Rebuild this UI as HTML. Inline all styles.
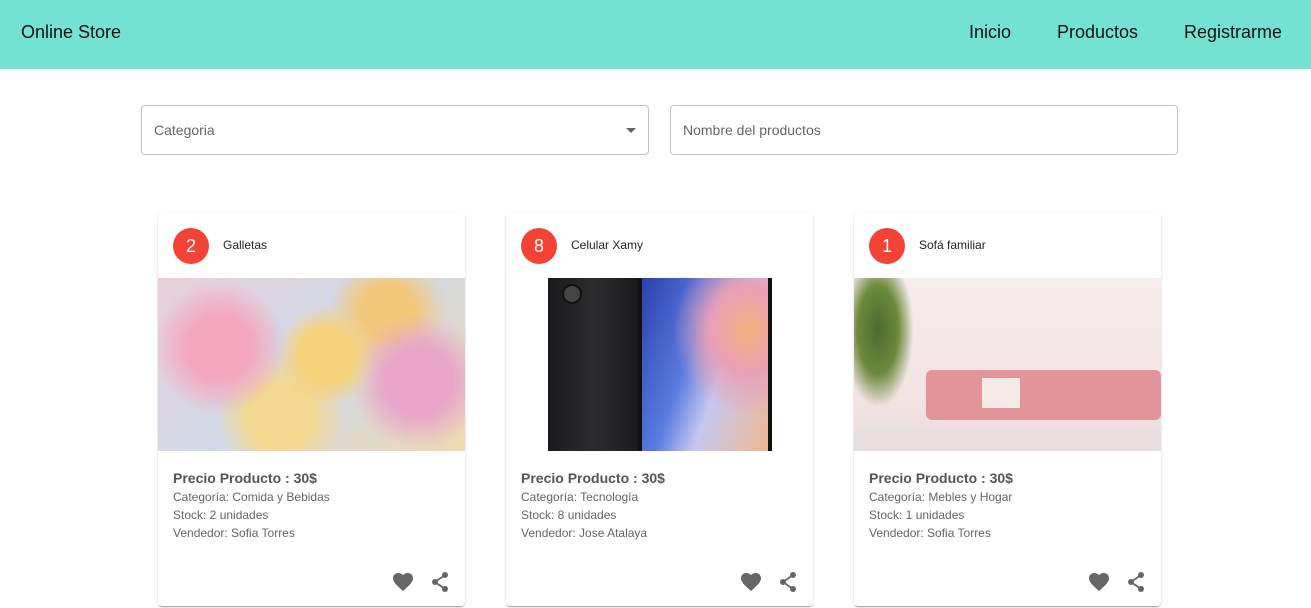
<!DOCTYPE html>
<html><head><style>
*{box-sizing:border-box;margin:0;padding:0}
body{width:1311px;height:608px;overflow:hidden;background:#fff;font-family:"Liberation Sans",Roboto,sans-serif;position:relative}
.bar{position:absolute;left:0;top:0;width:1311px;height:69px;background:#74e2d2}
.bar .t{position:absolute;left:21px;top:22px;font-size:18px;color:#111}
.bar .n{position:absolute;top:22px;font-size:18px;color:#111}
.in{position:absolute;top:105px;height:50px;border:1px solid #c4c4c4;border-radius:4px;font-size:14px;color:#666;padding:16px 12px}
.card{position:absolute;top:213px;width:307px;height:393px;background:#fff;border-radius:4px;box-shadow:0 2px 1px -1px rgba(0,0,0,.2),0 1px 1px rgba(0,0,0,.14),0 1px 3px rgba(0,0,0,.12);overflow:hidden}
.av{position:absolute;left:15px;top:15px;width:36px;height:36px;border-radius:50%;background:#f44336;color:#fff;font-size:18px;text-align:center;line-height:36px}
.ti{position:absolute;left:65px;top:25px;font-size:12px;color:#222}
.img{position:absolute;left:0;top:65px;width:307px;height:173px}
.tx{position:absolute;left:15px;top:256px;font-size:12px;color:#666;line-height:18px}
.tx b{font-size:14px;color:#555;display:block;line-height:18px;margin-bottom:1px}
.ic{position:absolute;top:358px;left:235px}
</style></head><body>
<div class="bar"><div class="t">Online Store</div>
<div class="n" style="left:969px">Inicio</div><div class="n" style="left:1057px">Productos</div><div class="n" style="left:1184px">Registrarme</div></div>
<div class="in" style="left:141px;width:508px">Categoria<span style="position:absolute;right:12px;top:22px;border:5px solid transparent;border-top:5px solid #666;border-bottom:0"></span></div>
<div class="in" style="left:670px;width:508px">Nombre del productos</div>

<div class="card" style="left:158px"><div class="av">2</div><div class="ti">Galletas</div>
<div class="img" style="background:radial-gradient(circle at 20% 40%,#f5a7c0 0 12%,transparent 25%),radial-gradient(circle at 55% 45%,#f6d27a 0 14%,transparent 26%),radial-gradient(circle at 85% 60%,#e9a6c8 0 12%,transparent 24%),radial-gradient(circle at 40% 80%,#f3d890 0 14%,transparent 28%),radial-gradient(circle at 75% 20%,#f5c77a 0 10%,transparent 22%),linear-gradient(135deg,#e9d0d8,#cfd9e8,#f0d9b0)"></div>
<div class="tx"><b>Precio Producto : 30$</b>Categoría: Comida y Bebidas<br>Stock: 2 unidades<br>Vendedor: Sofia Torres</div>
<svg class="ic" width="60" height="22" viewBox="0 0 60 22"><path fill="#666" d="M10 20l-1.5-1.3C3.4 14 0 11 0 7.3 0 4.3 2.3 2 5.3 2c1.7 0 3.4.8 4.7 2.1C11.3 2.8 13 2 14.7 2 17.7 2 20 4.3 20 7.3c0 3.7-3.4 6.7-8.5 11.4z"/><g fill="#666"><circle cx="52" cy="4" r="3"/><circle cx="42" cy="11" r="3"/><circle cx="52" cy="18" r="3"/></g><path d="M52 4L42 11L52 18" stroke="#666" stroke-width="1.8" fill="none"/></svg></div>

<div class="card" style="left:506px"><div class="av">8</div><div class="ti">Celular Xamy</div>
<div class="img" style="background:#fff"><div style="position:absolute;left:42px;top:0;width:90px;height:173px;background:linear-gradient(90deg,#1a1a1c,#2c2c2e,#1a1a1c)"><div style="position:absolute;left:14px;top:6px;width:20px;height:20px;border-radius:50%;background:#444;border:2px solid #111"></div></div><div style="position:absolute;left:132px;top:0;width:134px;height:173px;background:#111;padding:0 4px"><div style="width:100%;height:100%;background:radial-gradient(ellipse at 85% 30%,#f4b07a 0,#e9a0b8 25%,transparent 50%),linear-gradient(110deg,#2a3fb0,#5b7ce0 40%,#c5c8f0 60%,#f0b890)"></div></div></div>
<div class="tx"><b>Precio Producto : 30$</b>Categoría: Tecnología<br>Stock: 8 unidades<br>Vendedor: Jose Atalaya</div>
<svg class="ic" width="60" height="22" viewBox="0 0 60 22"><path fill="#666" d="M10 20l-1.5-1.3C3.4 14 0 11 0 7.3 0 4.3 2.3 2 5.3 2c1.7 0 3.4.8 4.7 2.1C11.3 2.8 13 2 14.7 2 17.7 2 20 4.3 20 7.3c0 3.7-3.4 6.7-8.5 11.4z"/><g fill="#666"><circle cx="52" cy="4" r="3"/><circle cx="42" cy="11" r="3"/><circle cx="52" cy="18" r="3"/></g><path d="M52 4L42 11L52 18" stroke="#666" stroke-width="1.8" fill="none"/></svg></div>

<div class="card" style="left:854px"><div class="av">1</div><div class="ti">Sofá familiar</div>
<div class="img" style="background:linear-gradient(#f7ecec,#f3e3e3 70%,#e9dddd)"><div style="position:absolute;left:0;top:0;width:60px;height:130px;background:radial-gradient(ellipse at 40% 40%,#4d6b2e,#6b8a3c 40%,transparent 70%)"></div><div style="position:absolute;left:72px;top:92px;width:235px;height:50px;background:#e3949a;border-radius:6px"></div><div style="position:absolute;left:128px;top:100px;width:38px;height:30px;background:#f4ece4"></div><div style="position:absolute;left:0;top:150px;width:307px;height:23px;background:#e8e0e0"></div></div>
<div class="tx"><b>Precio Producto : 30$</b>Categoría: Mebles y Hogar<br>Stock: 1 unidades<br>Vendedor: Sofia Torres</div>
<svg class="ic" width="60" height="22" viewBox="0 0 60 22"><path fill="#666" d="M10 20l-1.5-1.3C3.4 14 0 11 0 7.3 0 4.3 2.3 2 5.3 2c1.7 0 3.4.8 4.7 2.1C11.3 2.8 13 2 14.7 2 17.7 2 20 4.3 20 7.3c0 3.7-3.4 6.7-8.5 11.4z"/><g fill="#666"><circle cx="52" cy="4" r="3"/><circle cx="42" cy="11" r="3"/><circle cx="52" cy="18" r="3"/></g><path d="M52 4L42 11L52 18" stroke="#666" stroke-width="1.8" fill="none"/></svg></div>
</body></html>
